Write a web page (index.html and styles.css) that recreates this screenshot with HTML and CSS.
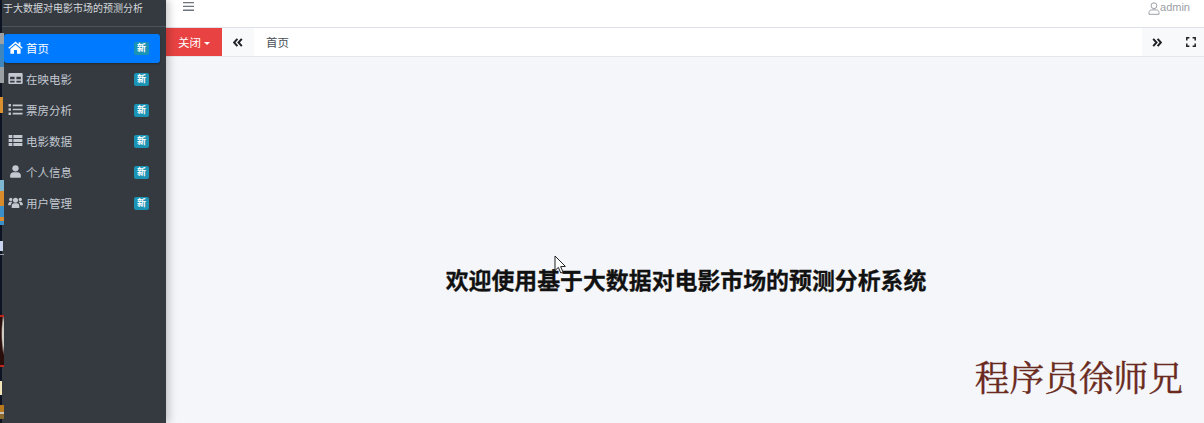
FILE: index.html
```html
<!DOCTYPE html>
<html lang="zh-CN">
<head>
<meta charset="utf-8">
<title>首页</title>
<link rel="stylesheet" href="styles.css">
</head>
<body>
<div class="app">
  <div class="strip">
    <i class="s s1"></i><i class="s s3"></i><i class="s s4"></i><i class="s s4b"></i><i class="s s5"></i><i class="s s6"></i><i class="s s7"></i><i class="s s8"></i>
  </div>
  <aside class="sidebar">
    <div class="brand">于大数据对电影市场的预测分析</div>
    <nav class="menu">
      <a class="item active">
        <svg class="ico" viewBox="0 0 16 14"><path fill="currentColor" d="M8 0.6 L0.2 7.2 L1.2 8.4 L8 2.7 L14.8 8.4 L15.8 7.2 L13.4 5.2 V1.4 H11.4 V3.5 Z M2.5 8.6 V13.6 H6.4 V9.6 H9.6 V13.6 H13.5 V8.6 L8 4 Z"/></svg>
        <span class="label">首页</span><span class="badge">新</span>
      </a>
      <a class="item">
        <svg class="ico" viewBox="0 0 16 14"><path fill="currentColor" fill-rule="evenodd" d="M1.5 1 H14.5 A1.2 1.2 0 0 1 15.7 2.2 V11.8 A1.2 1.2 0 0 1 14.5 13 H1.5 A1.2 1.2 0 0 1 .3 11.8 V2.2 A1.2 1.2 0 0 1 1.5 1 Z M2.2 5 V7.7 H7 V5 Z M9 5 V7.7 H13.8 V5 Z M2.2 9.3 V11.3 H7 V9.3 Z M9 9.3 V11.3 H13.8 V9.3 Z"/></svg>
        <span class="label">在映电影</span><span class="badge">新</span>
      </a>
      <a class="item">
        <svg class="ico" viewBox="0 0 16 14"><path fill="currentColor" d="M.5 1.2 H3.1 V3.8 H.5 Z M.5 5.7 H3.1 V8.3 H.5 Z M.5 10.2 H3.1 V12.8 H.5 Z M5 1.6 H15.6 V3.4 H5 Z M5 6.1 H15.6 V7.9 H5 Z M5 10.6 H15.6 V12.4 H5 Z"/></svg>
        <span class="label">票房分析</span><span class="badge">新</span>
      </a>
      <a class="item">
        <svg class="ico" viewBox="0 0 16 14"><path fill="currentColor" d="M.6 1 H4.6 V4.2 H.6 Z M5.7 1 H15.4 V4.2 H5.7 Z M.6 5.4 H4.6 V8.6 H.6 Z M5.7 5.4 H15.4 V8.6 H5.7 Z M.6 9.8 H4.6 V13 H.6 Z M5.7 9.8 H15.4 V13 H5.7 Z"/></svg>
        <span class="label">电影数据</span><span class="badge">新</span>
      </a>
      <a class="item">
        <svg class="ico" viewBox="0 0 16 14"><circle fill="currentColor" cx="8" cy="3.6" r="3.4"/><path fill="currentColor" d="M3 13.8 A1 1 0 0 1 2.2 12.9 V11.6 C2.2 9.4 3.8 7.9 5.8 7.9 H10.2 C12.2 7.9 13.8 9.4 13.8 11.6 V12.9 A1 1 0 0 1 13 13.8 Z"/></svg>
        <span class="label">个人信息</span><span class="badge">新</span>
      </a>
      <a class="item">
        <svg class="ico ico-wide" viewBox="0 0 16 14"><circle fill="currentColor" cx="8" cy="4.6" r="2.7"/><circle fill="currentColor" cx="2.9" cy="3.8" r="1.8"/><circle fill="currentColor" cx="13.1" cy="3.8" r="1.8"/><path fill="currentColor" d="M3.9 12.8 V10.6 C3.9 8.8 5 7.8 6.4 7.8 H9.6 C11 7.8 12.1 8.8 12.1 10.6 V12.8 Z M0 9.8 C0 7.6 1 6.2 2.6 6.2 H4.2 C4.5 6.2 4.6 6.5 4.5 6.8 C3.6 7.6 3 8.6 3 9.9 H.6 Z M16 9.8 C16 7.6 15 6.2 13.4 6.2 H11.8 C11.5 6.2 11.4 6.5 11.5 6.8 C12.4 7.6 13 8.6 13 9.9 H15.4 Z"/></svg>
        <span class="label">用户管理</span><span class="badge">新</span>
      </a>
    </nav>
  </aside>
  <main class="main">
    <header class="topbar">
      <svg class="burger" viewBox="0 0 11 9"><path fill="currentColor" d="M0 0 H11 V1.3 H0 Z M0 3.8 H11 V5.1 H0 Z M0 7.6 H11 V8.9 H0 Z"/></svg>
      <div class="user">
        <svg class="user-ico" viewBox="0 0 12 13"><path fill="none" stroke="currentColor" stroke-width="1" d="M6 .8 A2.9 2.9 0 1 1 6 6.6 A2.9 2.9 0 1 1 6 .8 Z M1 12.3 V10.6 C1 8.9 2.2 7.9 3.6 7.9 H8.4 C9.8 7.9 11 8.9 11 10.6 V12.3 Z"/></svg><span>admin</span>
      </div>
    </header>
    <div class="tabs">
      <button class="close-btn">关闭<span class="caret"></span></button>
      <button class="tab-nav">
        <svg class="chev" viewBox="0 0 10 9"><path fill="none" stroke="currentColor" stroke-width="2" d="M4.4 .8 L1.1 4.5 L4.4 8.2 M8.8 .8 L5.5 4.5 L8.8 8.2"/></svg>
      </button>
      <div class="tab-list"><span class="tab">首页</span></div>
      <button class="tab-nav tab-next">
        <svg class="chev" viewBox="0 0 10 9"><path fill="none" stroke="currentColor" stroke-width="2" d="M1.2 .8 L4.5 4.5 L1.2 8.2 M5.6 .8 L8.9 4.5 L5.6 8.2"/></svg>
      </button>
      <button class="tab-nav tab-full">
        <svg class="full" viewBox="0 0 10 10"><path fill="none" stroke="currentColor" stroke-width="1.5" d="M.8 3.4 V.8 H3.4 M6.6 .8 H9.2 V3.4 M9.2 6.6 V9.2 H6.6 M3.4 9.2 H.8 V6.6"/></svg>
      </button>
    </div>
    <section class="content">
      <h1 class="welcome">欢迎使用基于大数据对电影市场的预测分析系统</h1>
      <div class="watermark">程序员徐师兄</div>
      <svg class="cursor" viewBox="0 0 13 20"><path fill="#fff" stroke="#222" stroke-width="1" d="M1 1 V15.5 L4.4 12.4 L6.8 18 L9 17 L6.6 11.6 L11.4 11.4 Z"/></svg>
    </section>
  </main>
</div>
</body>
</html>
```
FILE: styles.css
```css
* { box-sizing: border-box; }
html, body { margin: 0; height: 100%; overflow: hidden; }
body { font-family: "Liberation Sans", "Noto Sans CJK SC", sans-serif; background: #f4f6f9; }
.app { display: flex; height: 423px; width: 1204px; }
.strip { width: 2px; flex: none; background: #0e1424; position: relative; z-index: 3; }
.s { position: absolute; left: 0; width: 4px; display: block; }
.s1 { top: 33px; height: 50px; background: linear-gradient(#9aa0a4 0 22%, #3f86bd 22% 68%, #9aa0a4 68% 100%); }
.s3 { top: 180px; height: 45px; background: linear-gradient(#7fb6d0 0 24%, #d98a2a 24% 58%, #3a8fc8 58% 82%, #d98a2a 82% 92%, #3a8fc8 92% 100%); }
.s4 { top: 241px; height: 10px; width: 3px; background: #c8d4f0; }
.s4b { top: 254px; height: 1px; background: #9aa2ac; }
.s5 { top: 315px; height: 52px; background: radial-gradient(ellipse at 100% 35%, #cfcac4 0 28%, #2a0e0c 50%); border-top: 2px solid #c1261c; border-bottom: 2px solid #c1261c; }
.s6 { top: 381px; height: 14px; width: 2px; background: #f0e4b8; }
.s7 { top: 405px; height: 14px; background: linear-gradient(#b8791f 0 50%, #c7c2b6 50% 65%, #8a6a30 65% 100%); }
.s8 { top: 97px; height: 16px; width: 3px; background: #d9902f; }
.sidebar { width: 164px; flex: none; background: #343a40; color: #c2c7d0; box-shadow: 3px 0 8px rgba(0,0,0,.22); position: relative; z-index: 2; }
.brand { height: 27px; padding: 2px 0 0 1px; font-size: 10px; line-height: 14px; color: #d5d8dc; white-space: nowrap; border-bottom: 1px solid #4b545c; }
.menu { display: flex; flex-direction: column; gap: 2px; padding: 7px 6px 0 2px; }
.item { display: flex; align-items: center; height: 29px; border-radius: 3px; padding: 0 11px 2px 4px; font-size: 11.5px; color: #c2c7d0; }
.item.active { background: #007bff; color: #fff; box-shadow: 0 1px 2px rgba(0,0,0,.3); }
.ico { width: 15px; height: 13px; flex: none; margin-right: 3px; }
.ico-wide { width: 17px; margin: 0 2px 0 -1px; }
.label { flex: 1; }
.badge { width: 15px; height: 13px; margin-top: 2px; border-radius: 2px; background: #1a93b5; color: #fff; font-size: 9px; font-weight: 700; line-height: 13px; text-align: center; }
.main { flex: 1; min-width: 0; display: flex; flex-direction: column; }
.topbar { height: 28px; flex: none; background: #fff; border-bottom: 1px solid #dee2e6; display: flex; justify-content: space-between; padding: 2px 14px 0 17px; }
.burger { width: 11px; height: 9px; color: #6c757d; }
.user { display: flex; align-items: flex-start; font-size: 11px; line-height: 10px; color: #9aa0a6; }
.user-ico { width: 12px; height: 13px; }
.tabs { height: 29px; flex: none; display: flex; background: #fff; border-bottom: 1px solid #e4e6ea; }
.close-btn { width: 56px; border: 0; padding: 0; background: #e84342; color: #fff; font: 11.5px "Liberation Sans", "Noto Sans CJK SC", sans-serif; }
.caret { display: inline-block; margin-left: 3px; vertical-align: 2px; border-top: 3px solid #fff; border-left: 3px solid transparent; border-right: 3px solid transparent; }
.tab-nav { width: 32px; border: 0; padding: 0; background: #f8f9fa; color: #1f2328; display: flex; align-items: center; justify-content: center; }
.tab-next { padding-right: 2px; }
.tab-full { width: 30px; padding-left: 4px; }
.chev { width: 10px; height: 9px; }
.full { width: 10px; height: 10px; }
.tab-list { flex: 1; display: flex; align-items: center; }
.tab { font-size: 11.5px; color: #495057; padding-left: 12px; }
.content { flex: 1; position: relative; background: #f4f6f9; }
.welcome { margin: 0; padding: 208px 0 0 2px; text-align: center; font-size: 22.9px; line-height: 32px; font-weight: 700; color: #111; -webkit-text-stroke: .3px #111; }
.watermark { position: absolute; right: 21px; top: 303px; font: 34.7px/40px "Liberation Serif", "Noto Serif CJK SC", serif; color: #6a2a20; white-space: nowrap; -webkit-text-stroke: .4px #6a2a20; }
.cursor { position: absolute; left: 388px; top: 198px; width: 13px; height: 20px; }
```
